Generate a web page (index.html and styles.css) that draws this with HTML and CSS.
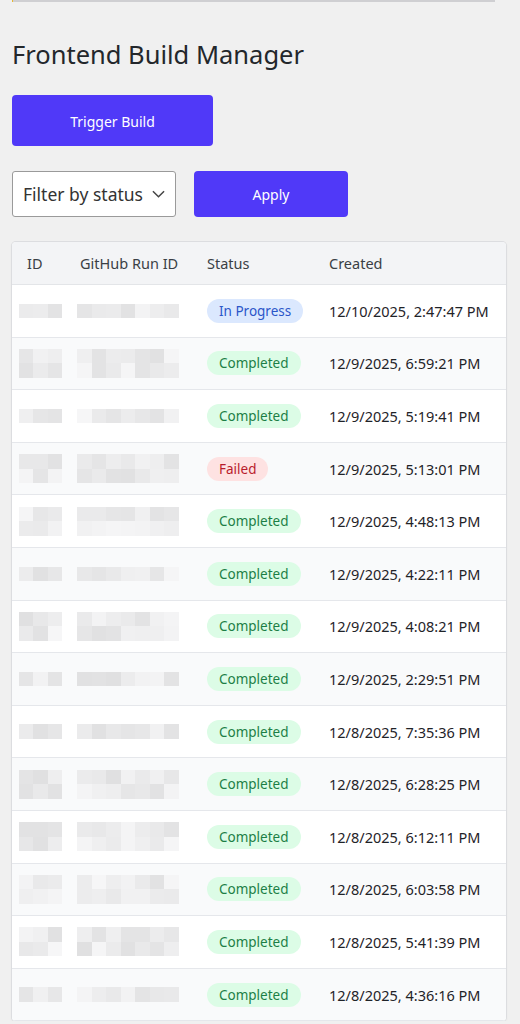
FILE: index.html
```html
<!DOCTYPE html>
<html lang="en">
<head>
    <meta charset="UTF-8">
    <meta name="viewport" content="width=device-width, initial-scale=1.0">
    <title>Frontend Build Manager</title>
    <link rel="stylesheet" href="styles.css">
</head>
<body>
    <div class="top-edge"></div>

    <main class="page">
        <h1 class="title">Frontend Build Manager</h1>

        <button class="btn btn-trigger">Trigger Build</button>

        <div class="filters">
            <div class="select">
                <span>Filter by status</span>
                <svg class="chevron" viewBox="0 0 14 8" width="13" height="8">
                    <path d="M1 1l6 6 6-6" fill="none" stroke="#444" stroke-width="1.6"/>
                </svg>
            </div>
            <button class="btn btn-apply">Apply</button>
        </div>

        <div class="table-card">
            <table class="builds">
                <colgroup>
                    <col class="col-id">
                    <col class="col-run">
                    <col class="col-status">
                    <col>
                </colgroup>
                <thead>
                    <tr>
                        <th>ID</th>
                        <th>GitHub Run ID</th>
                        <th>Status</th>
                        <th>Created</th>
                    </tr>
                </thead>
                <tbody>
                    <tr><td><div class="mosaic id" data-rows="1"></div></td><td><div class="mosaic run" data-rows="1"></div></td><td><span class="badge progress">In Progress</span></td><td>12/10/2025, 2:47:47 PM</td></tr>
                    <tr><td><div class="mosaic id"></div></td><td><div class="mosaic run"></div></td><td><span class="badge done">Completed</span></td><td>12/9/2025, 6:59:21 PM</td></tr>
                    <tr><td><div class="mosaic id" data-rows="1"></div></td><td><div class="mosaic run" data-rows="1"></div></td><td><span class="badge done">Completed</span></td><td>12/9/2025, 5:19:41 PM</td></tr>
                    <tr><td><div class="mosaic id"></div></td><td><div class="mosaic run"></div></td><td><span class="badge failed">Failed</span></td><td>12/9/2025, 5:13:01 PM</td></tr>
                    <tr><td><div class="mosaic id"></div></td><td><div class="mosaic run"></div></td><td><span class="badge done">Completed</span></td><td>12/9/2025, 4:48:13 PM</td></tr>
                    <tr><td><div class="mosaic id" data-rows="1"></div></td><td><div class="mosaic run" data-rows="1"></div></td><td><span class="badge done">Completed</span></td><td>12/9/2025, 4:22:11 PM</td></tr>
                    <tr><td><div class="mosaic id"></div></td><td><div class="mosaic run"></div></td><td><span class="badge done">Completed</span></td><td>12/9/2025, 4:08:21 PM</td></tr>
                    <tr><td><div class="mosaic id" data-rows="1"></div></td><td><div class="mosaic run" data-rows="1"></div></td><td><span class="badge done">Completed</span></td><td>12/9/2025, 2:29:51 PM</td></tr>
                    <tr><td><div class="mosaic id" data-rows="1"></div></td><td><div class="mosaic run" data-rows="1"></div></td><td><span class="badge done">Completed</span></td><td>12/8/2025, 7:35:36 PM</td></tr>
                    <tr><td><div class="mosaic id"></div></td><td><div class="mosaic run"></div></td><td><span class="badge done">Completed</span></td><td>12/8/2025, 6:28:25 PM</td></tr>
                    <tr><td><div class="mosaic id"></div></td><td><div class="mosaic run"></div></td><td><span class="badge done">Completed</span></td><td>12/8/2025, 6:12:11 PM</td></tr>
                    <tr><td><div class="mosaic id"></div></td><td><div class="mosaic run"></div></td><td><span class="badge done">Completed</span></td><td>12/8/2025, 6:03:58 PM</td></tr>
                    <tr><td><div class="mosaic id"></div></td><td><div class="mosaic run"></div></td><td><span class="badge done">Completed</span></td><td>12/8/2025, 5:41:39 PM</td></tr>
                    <tr><td><div class="mosaic id" data-rows="1"></div></td><td><div class="mosaic run" data-rows="1"></div></td><td><span class="badge done">Completed</span></td><td>12/8/2025, 4:36:16 PM</td></tr>
                </tbody>
            </table>
        </div>
    </main>

    <script>
        // Redacted IDs are shown as a pixelated block of grey cells
        function fillMosaics() {
            let seed = 7;
            const rand = () => {
                seed = (seed * 9301 + 49297) % 233280;
                return seed / 233280;
            };
            document.querySelectorAll('.mosaic').forEach(block => {
                const cols = block.classList.contains('id') ? 3 : 7;
                const rows = Number(block.dataset.rows || 2);
                block.style.gridTemplateColumns = `repeat(${cols}, 1fr)`;
                for (let i = 0; i < cols * rows; i++) {
                    const cell = document.createElement('span');
                    const shade = Math.round(224 + rand() * 22);
                    cell.style.background = `rgb(${shade}, ${shade}, ${shade + 1})`;
                    block.appendChild(cell);
                }
            });
        }

        fillMosaics();
    </script>
</body>
</html>
```

FILE: styles.css
```css
body {
    margin: 0;
    background: #f0f0f0;
    font-family: "Noto Sans", "Open Sans", sans-serif;
    color: #1f2328;
}

.top-edge {
    height: 2px;
    margin: 0 25px 0 12px;
    background: #cfcfd2;
    border-left: 1px solid #e8b830;
}

.page {
    padding: 0 14px 0 12px;
}

.title {
    margin: 36px 0 24px;
    font-size: 25.5px;
    font-weight: 400;
    line-height: 33px;
    color: #23272b;
}

.btn {
    border: none;
    border-radius: 4px;
    background: #5039f8;
    color: #ffffff;
    font-family: inherit;
    font-size: 14px;
    cursor: pointer;
}

.btn-trigger {
    display: block;
    width: 201px;
    height: 51px;
    padding-top: 2px;
}

.filters {
    display: flex;
    gap: 18px;
    margin: 25px 0 25px;
}

.select {
    width: 164px;
    height: 46px;
    box-sizing: border-box;
    display: flex;
    align-items: center;
    justify-content: space-between;
    padding: 0 10px 0 10px;
    background: #ffffff;
    border: 1px solid #9a9a9a;
    border-radius: 3px;
    font-size: 17.5px;
    color: #333;
}

.btn-apply {
    width: 154px;
    height: 46px;
}

.table-card {
    background: #ffffff;
    border-radius: 4px;
    box-shadow: 0 0 0 1px #dcdde0, 0 1px 3px rgba(0, 0, 0, 0.08);
    overflow: hidden;
}

.builds {
    width: 100%;
    table-layout: fixed;
    border-collapse: collapse;
    font-size: 14.5px;
}

.col-id { width: 53px; }
.col-run { width: 127px; }
.col-status { width: 122px; }

.builds th {
    height: 42px;
    padding: 0 15px;
    text-align: left;
    font-weight: 400;
    color: #3a3f45;
    background: #f3f4f6;
    border-bottom: 1px solid #e3e5e8;
    white-space: nowrap;
}

.builds td {
    height: 51.6px;
    padding: 0 15px;
    border-bottom: 1px solid #e5e7eb;
    color: #1f2328;
    white-space: nowrap;
}

.builds tbody tr:nth-child(even) {
    background: #f9fafb;
}

.builds td:first-child {
    padding: 0 8px 0 7px;
}

.builds td:nth-child(2) {
    padding: 0 8px 0 12px;
}

.mosaic {
    display: grid;
    grid-auto-rows: 14.5px;
}

.mosaic.id { width: 43px; }
.mosaic.run { width: 102px; }

.badge {
    display: inline-block;
    padding: 0 12px;
    line-height: 24px;
    border-radius: 12px;
    font-size: 13.5px;
}

.badge.progress { background: #dbe8fe; color: #2b56c9; }
.badge.done { background: #dcfce6; color: #1c7f46; }
.badge.failed { background: #fee2e2; color: #b91c2c; }
```
